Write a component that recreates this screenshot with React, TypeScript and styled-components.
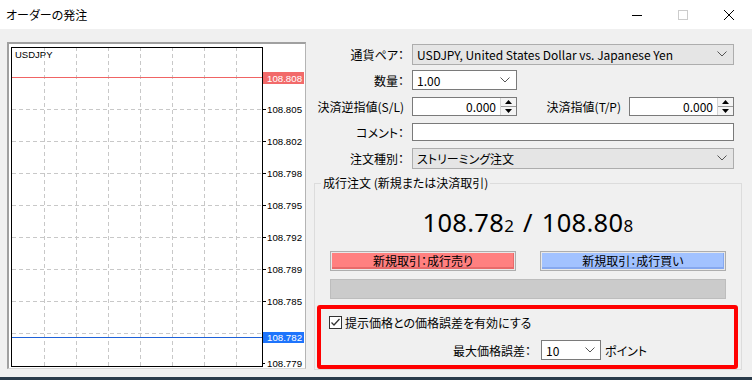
import React from "react";
import styled, { createGlobalStyle } from "styled-components";

const GlobalStyle = createGlobalStyle`
  html, body {
    margin: 0;
    padding: 0;
    background: #f0f0f0;
  }
  body {
    font-family: "Noto Sans CJK JP", "Noto Sans", sans-serif;
    font-size: 12px;
    color: #000;
    font-feature-settings: "palt";
  }
`;

const Window = styled.div`
  width: 752px;
  height: 380px;
  display: flex;
  flex-direction: column;
  background: #f0f0f0;
  overflow: hidden;
`;

const TitleBar = styled.div`
  height: 29px;
  flex-shrink: 0;
  background: #fff;
  display: flex;
  align-items: center;
`;

const Title = styled.div`
  flex: 1;
  padding-left: 6px;
  font-size: 12px;
`;

const CaptionButton = styled.div`
  width: 46px;
  height: 29px;
  display: flex;
  align-items: center;
  justify-content: center;
`;

const Body = styled.div`
  flex: 1;
  display: flex;
  gap: 8px;
  padding-left: 7px;
`;

const ChartFrame = styled.div`
  margin-top: 13px;
  width: 299px;
  height: 327px;
  box-sizing: border-box;
  background: #fff;
  border-top: 2px solid #a0a0a0;
  border-left: 2px solid #a0a0a0;
  border-right: 1px solid #b4b4b4;
  border-bottom: 1px solid #d8d8d8;
  overflow: hidden;

  svg {
    display: block;
  }
`;

const Side = styled.div`
  width: 428px;
  padding-top: 12px;
  display: flex;
  flex-direction: column;
`;

const FormGrid = styled.div`
  display: grid;
  grid-template-columns: 90px 105px 96px 105px;
  grid-auto-rows: 26px;
  column-gap: 8px;
  align-items: center;
`;

const Label = styled.div`
  text-align: right;
  white-space: nowrap;
`;

const Combo = styled.div<{ $grey?: boolean; $span?: number; $h: number }>`
  grid-column: ${(p) => (p.$span ? `span ${p.$span}` : "auto")};
  height: ${(p) => p.$h}px;
  box-sizing: border-box;
  border: 1px solid ${(p) => (p.$grey ? "#adadad" : "#7a7a7a")};
  background: ${(p) => (p.$grey ? "#e5e5e5" : "#fff")};
  display: flex;
  align-items: center;
  justify-content: space-between;
  padding: 0 6px 0 4px;
  white-space: nowrap;
`;

const TextBox = styled.div<{ $span?: number; $h: number }>`
  grid-column: ${(p) => (p.$span ? `span ${p.$span}` : "auto")};
  height: ${(p) => p.$h}px;
  box-sizing: border-box;
  border: 1px solid #7a7a7a;
  background: #fff;
  display: flex;
  align-items: stretch;
`;

const NumberValue = styled.div`
  flex: 1;
  text-align: right;
  padding-right: 4px;
  line-height: 17px;
`;

const Spin = styled.div`
  width: 15px;
  display: flex;
  flex-direction: column;
  border-left: 1px solid #d4d4d4;
`;

const SpinHalf = styled.div<{ $top?: boolean }>`
  flex: 1;
  display: flex;
  align-items: center;
  justify-content: center;
  background: #f4f4f4;
  border-bottom: ${(p) => (p.$top ? "1px solid #9a9a9a" : "none")};
`;

const Group = styled.fieldset`
  margin: 4px 0 0;
  padding: 0;
  border: 1px solid #dcdcdc;
  min-inline-size: 0;
`;

const Legend = styled.legend`
  margin-left: 6px;
  padding: 0 2px;
  font-size: 12px;
  line-height: 16px;
`;

const Quote = styled.div`
  margin-top: 16px;
  height: 30px;
  line-height: 30px;
  text-align: center;
  font-family: "Noto Sans", sans-serif;
  font-size: 25.5px;
  letter-spacing: 0.3px;
  word-spacing: 2px;
`;

const SmallDigit = styled.span`
  font-size: 17px;
`;

const ButtonRow = styled.div`
  margin-top: 14px;
  padding: 0 15px;
  display: flex;
  gap: 24px;
`;

const OrderButton = styled.div<{ $fill: string; $shade: string }>`
  flex: 1;
  height: 20px;
  box-sizing: border-box;
  border: 1px solid #adadad;
  background: ${(p) => p.$fill};
  box-shadow: inset 0 0 0 1px #e8e8e8, inset -1px -2px 0 1px ${(p) => p.$shade};
  display: flex;
  align-items: center;
  justify-content: center;
  line-height: 18px;
`;

const ProgressBar = styled.div`
  margin: 8px 15px 0;
  height: 20px;
  box-sizing: border-box;
  background: #cbcbcb;
  border: 1px solid #bdbdbd;
`;

const Highlight = styled.div`
  margin: 6px 3px 0 2px;
  height: 64px;
  box-sizing: border-box;
  border: 4px solid #ff0000;
  border-radius: 3px;
  padding: 5px 0 0 8px;
`;

const CheckRow = styled.div`
  height: 16px;
  display: flex;
  align-items: center;
  gap: 3px;
`;

const CheckBox = styled.span`
  width: 13px;
  height: 13px;
  box-sizing: border-box;
  border: 1px solid #333;
  background: #fff;
  display: flex;
  align-items: center;
  justify-content: center;
`;

const DeviationRow = styled.div`
  margin-top: 10px;
  padding-left: 124px;
  height: 20px;
  display: flex;
  align-items: center;
`;

const DeviationLabel = styled.span`
  margin-right: 10px;
`;

const SmallCombo = styled.div`
  width: 60px;
  height: 20px;
  box-sizing: border-box;
  border: 1px solid #7a7a7a;
  background: #fff;
  display: flex;
  align-items: center;
  justify-content: space-between;
  padding: 0 5px 0 4px;
  margin-right: 4px;
`;

const BottomStrip = styled.div`
  height: 3px;
  flex-shrink: 0;
  background: #2b3c4b;
`;

function Chevron() {
  return (
    <svg width="10" height="6" viewBox="0 0 10 6">
      <polyline points="0.5,0.5 5,5 9.5,0.5" fill="none" stroke="#555" strokeWidth="1" />
    </svg>
  );
}

function Arrow({ up }: { up?: boolean }) {
  return (
    <svg width="7" height="4" viewBox="0 0 7 4">
      <polygon points={up ? "3.5,0 7,4 0,4" : "0,0 7,0 3.5,4"} fill="#000" />
    </svg>
  );
}

function SpinBox({ value }: { value: string }) {
  return (
    <TextBox $h={19}>
      <NumberValue>{value}</NumberValue>
      <Spin>
        <SpinHalf $top>
          <Arrow up />
        </SpinHalf>
        <SpinHalf>
          <Arrow />
        </SpinHalf>
      </Spin>
    </TextBox>
  );
}

const gridX = [35.5, 67.5, 99.5, 131.5, 163.5, 195.5, 227.5];
const levels = [
  { y: 65.5, label: "108.805" },
  { y: 97.5, label: "108.802" },
  { y: 129.5, label: "108.798" },
  { y: 161.5, label: "108.795" },
  { y: 193.5, label: "108.792" },
  { y: 225.5, label: "108.789" },
  { y: 257.5, label: "108.785" },
];

function PriceChart() {
  const axisFont = { fontFamily: "'Liberation Sans', Arial, sans-serif", fontSize: 9.7 };
  return (
    <svg width="296" height="324" viewBox="0 0 296 324">
      {gridX.map((x) => (
        <line key={x} x1={x} y1={3} x2={x} y2={322} stroke="#c8c8c8" strokeDasharray="4 3" />
      ))}
      {levels.map((l) => (
        <g key={l.label}>
          <line x1={3} y1={l.y} x2={253} y2={l.y} stroke="#c8c8c8" strokeDasharray="4 3" />
          <line x1={253} y1={l.y} x2={257} y2={l.y} stroke="#000" />
          <text x={258} y={l.y + 3.5} {...axisFont} fill="#000">
            {l.label}
          </text>
        </g>
      ))}
      <line x1={3} y1={289.5} x2={253} y2={289.5} stroke="#c8c8c8" strokeDasharray="4 3" />
      <line x1={253} y1={319.5} x2={256} y2={319.5} stroke="#000" />
      <text x={258} y={323} {...axisFont} fill="#000">
        108.779
      </text>
      <rect x={2.5} y={3.5} width={251} height={319} fill="none" stroke="#000" />
      <text x={6} y={14} fontFamily="'Liberation Sans', Arial, sans-serif" fontSize={9.5} fill="#000">
        USDJPY
      </text>
      <line x1={3} y1={33.5} x2={253} y2={33.5} stroke="#f06464" />
      <rect x={254} y={28} width={41} height={12} fill="#f26a6a" />
      <text x={258} y={37.5} {...axisFont} fill="#fff">
        108.808
      </text>
      <line x1={3} y1={293.5} x2={253} y2={293.5} stroke="#1f62d8" />
      <rect x={254} y={288} width={41} height={11} fill="#1e74fc" />
      <text x={258} y={297} {...axisFont} fill="#fff">
        108.782
      </text>
    </svg>
  );
}

export default function App() {
  return (
    <Window>
      <GlobalStyle />
      <TitleBar>
        <Title>オーダーの発注</Title>
        <CaptionButton>
          <svg width="10" height="10" viewBox="0 0 10 10">
            <line x1="0" y1="5.5" x2="10" y2="5.5" stroke="#000" />
          </svg>
        </CaptionButton>
        <CaptionButton>
          <svg width="10" height="10" viewBox="0 0 10 10">
            <rect x="0.5" y="0.5" width="9" height="9" fill="none" stroke="#cccccc" />
          </svg>
        </CaptionButton>
        <CaptionButton>
          <svg width="10" height="10" viewBox="0 0 10 10">
            <path d="M0 0 L10 10 M10 0 L0 10" stroke="#000" strokeWidth="1" />
          </svg>
        </CaptionButton>
      </TitleBar>

      <Body>
        <ChartFrame>
          <PriceChart />
        </ChartFrame>

        <Side>
          <FormGrid>
            <Label>通貨ペア：</Label>
            <Combo $grey $span={3} $h={21}>
              <span>USDJPY, United States Dollar vs. Japanese Yen</span>
              <Chevron />
            </Combo>

            <Label>数量：</Label>
            <Combo $h={20}>
              <span>1.00</span>
              <Chevron />
            </Combo>
            <span />
            <span />

            <Label>決済逆指値(S/L)</Label>
            <SpinBox value="0.000" />
            <Label>決済指値(T/P)</Label>
            <SpinBox value="0.000" />

            <Label>コメント：</Label>
            <TextBox $span={3} $h={18} />

            <Label>注文種別：</Label>
            <Combo $grey $span={3} $h={21}>
              <span>ストリーミング注文</span>
              <Chevron />
            </Combo>
          </FormGrid>

          <Group>
            <Legend>成行注文 (新規または決済取引)</Legend>
            <Quote>
              108.78<SmallDigit>2</SmallDigit> / 108.80<SmallDigit>8</SmallDigit>
            </Quote>
            <ButtonRow>
              <OrderButton $fill="#ff8080" $shade="#e86a6a">新規取引：成行売り</OrderButton>
              <OrderButton $fill="#a2c2ff" $shade="#86a8ef">新規取引：成行買い</OrderButton>
            </ButtonRow>
            <ProgressBar />
            <Highlight>
              <CheckRow>
                <CheckBox>
                  <svg width="11" height="11" viewBox="0 0 11 11">
                    <polyline points="1.5,5.5 4,8 9.5,2" fill="none" stroke="#333" strokeWidth="1.3" />
                  </svg>
                </CheckBox>
                <span>提示価格との価格誤差を有効にする</span>
              </CheckRow>
              <DeviationRow>
                <DeviationLabel>最大価格誤差：</DeviationLabel>
                <SmallCombo>
                  <span>10</span>
                  <Chevron />
                </SmallCombo>
                <span>ポイント</span>
              </DeviationRow>
            </Highlight>
          </Group>
        </Side>
      </Body>
      <BottomStrip />
    </Window>
  );
}
